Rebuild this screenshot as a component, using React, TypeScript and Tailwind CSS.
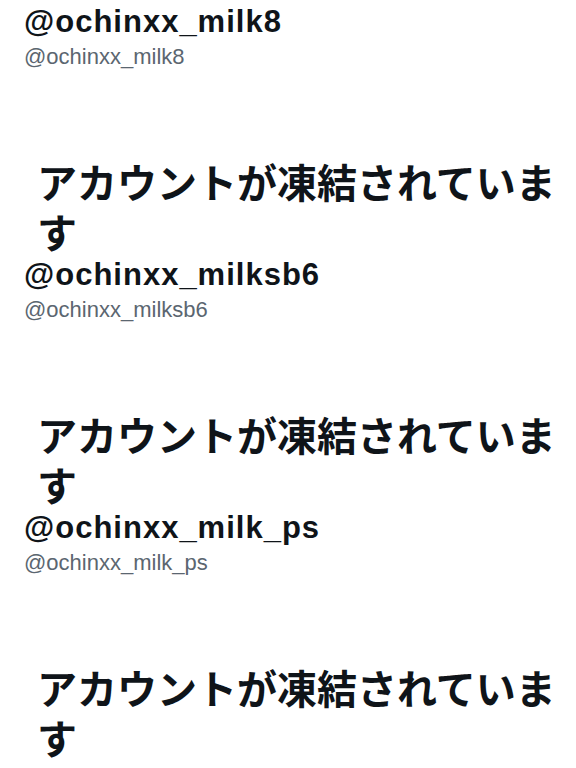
import React, { FC } from 'react';

const handles = ['ochinxx_milk8', 'ochinxx_milksb6', 'ochinxx_milk_ps'];

const SuspendedBlock: FC<{ handle: string }> = ({ handle }) => {
    return (
        <div className="flex flex-col">
            <h2 className="pl-[24px] text-[31px] leading-[32px] font-bold tracking-[1px] text-[#0f1419] whitespace-nowrap">
                @{handle}
            </h2>
            <p className="mt-[6px] pl-[24px] text-[22px] leading-[26px] text-[#5b6670] whitespace-nowrap">
                @{handle}
            </p>
            <h1 className="mt-[89px] pl-[37px] pr-[14px] text-[40px] leading-[50px] font-bold text-[#0f1419]">
                アカウントが凍結されています
            </h1>
        </div>
    );
};

const App: FC = () => {
    return (
        <div
            className="w-[576px] h-[768px] overflow-hidden bg-white pt-[6px]"
            style={{ fontFamily: '"Liberation Sans", "Noto Sans CJK JP", sans-serif' }}
        >
            {handles.map((h) => (
                <SuspendedBlock key={h} handle={h} />
            ))}
        </div>
    );
};

export default App;
